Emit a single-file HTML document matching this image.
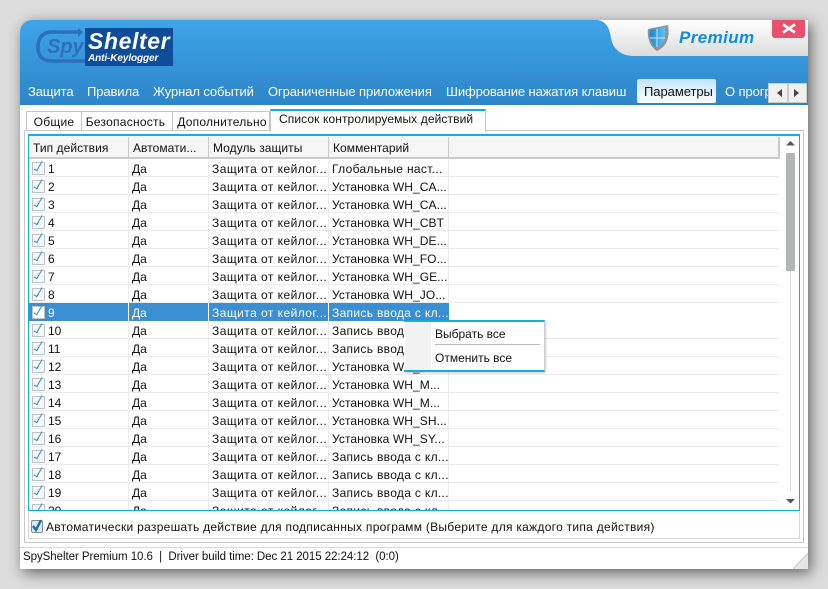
<!DOCTYPE html>
<html><head><meta charset="utf-8">
<style>
html,body{margin:0;padding:0;width:828px;height:589px;overflow:hidden;background:#dcdcdc;font-family:"Liberation Sans",sans-serif;font-size:12px;color:#111}
div,span{position:absolute;white-space:nowrap;box-sizing:border-box}
#win{left:20px;top:20px;width:788px;height:549px;background:#fff;border-radius:12px 0 0 0;box-shadow:3px 4px 14px rgba(0,0,0,.55)}
#head{left:20px;top:20px;width:788px;height:85px;border-radius:12px 0 0 0;background:linear-gradient(#3ea4e8,#2d85c8)}
.t{top:84px;color:#fff;font-size:13px;letter-spacing:-.1px}
.tab{top:111px;height:20px;border:1px solid #c4c4c4;border-bottom:none;background:#fff;padding:3px 0 0;text-align:center;letter-spacing:.25px}
.h{top:137px;height:22px;background:#f5f5f5;border-right:2px solid #cacaca;border-bottom:2px solid #cacaca;padding:4px 0 0 4px;letter-spacing:.05px}
.r{left:29px;width:750px;height:18px;border-bottom:1px solid #ececec}
.r span{top:3px}
.a{left:103px}.b{left:183px;letter-spacing:.45px}.c{left:303px;letter-spacing:.08px}.z{letter-spacing:.32px}.n{left:19px}
.r i{position:absolute;top:0;bottom:-1px;width:1px;background:#ececec}
.k{position:absolute;left:3px;top:3px;width:11px;height:11px;border:1px solid #bcc4ca;background:#f7f7f7}
.k:after{content:"";position:absolute;left:3px;top:-3px;width:3px;height:10px;border-right:1.7px solid #2a93bd;border-bottom:1.7px solid #2a93bd;transform:rotate(30deg)}
.s{background:#3a8fd2;color:#fff;width:420px;border:none}
.s .k{background:#fff}
</style></head><body>
<div id="win"></div>
<div id="head"></div>
<svg style="position:absolute;left:0;top:0" width="828" height="589">
<defs><linearGradient id="g" x1="0" y1="0" x2="0" y2="1"><stop offset="0" stop-color="#fff"/><stop offset="1" stop-color="#dcdcdc"/></linearGradient>
<linearGradient id="sh" x1="0" y1="0" x2="1" y2="0"><stop offset="0" stop-color="#1b86cf"/><stop offset="1" stop-color="#62c4ee"/></linearGradient></defs>
<path d="M596 20C608 20 610 32 611 38C613 50 622 56 634 56H808V20Z" fill="url(#g)"/>
<path d="M648 29L668 25C670 38 667 46 657 51C650 47 647 38 648 29Z" fill="#8f9498"/>
<path d="M650 30L665 27C666 38 664 44 656 48C651 44 649 38 650 30Z" fill="url(#sh)"/>
<path d="M657 29V47M650 38H665" stroke="#c5e9f8" stroke-width="1" fill="none"/>
<path d="M79 32H52C42 32 38 38 38 47C38 56 42 61 52 61H85" fill="none" stroke="#2d6ebd" stroke-width="3.5"/>
<path d="M78 28L83 32L78 37Z" fill="#2d6ebd"/>
<path d="M808 553L793 569H808Z" fill="#e6e6e6"/>
<path d="M808 553L793 569" stroke="#ccc"/>
</svg>
<span style="left:47px;top:36px;font:italic bold 20px 'Liberation Sans',sans-serif;color:#2d6ebd">Spy</span>
<div style="left:85px;top:28px;width:88px;height:38px;background:#0f4c99"></div>
<span style="left:88px;top:28px;font:italic bold 23px 'Liberation Sans',sans-serif;color:#fff;letter-spacing:.6px">Shelter</span>
<span style="left:88px;top:53px;font:italic bold 10px 'Liberation Sans',sans-serif;color:#fff;letter-spacing:-.1px">Anti-Keylogger</span>
<span style="left:679px;top:28px;font:italic bold 17px 'Liberation Sans',sans-serif;color:#0f8fd9;letter-spacing:.4px">Premium</span>
<div style="left:772px;top:20px;width:33px;height:18px;background:#e8506e;border-radius:0 0 3px 3px"></div>
<svg style="position:absolute;left:782px;top:23px" width="14" height="11"><path d="M1 1.5L13 9.5M13 1.5L1 9.5" stroke="#fff" stroke-width="2.6"/></svg>

<span class="t" style="left:28px">Защита</span>
<span class="t" style="left:87px">Правила</span>
<span class="t" style="left:153px">Журнал событий</span>
<span class="t" style="left:268px">Ограниченные приложения</span>
<span class="t" style="left:446px">Шифрование нажатия клавиш</span>
<div style="left:637px;top:79px;width:79px;height:24px;background:linear-gradient(#c4e4fa,#fff);border-radius:2px;padding:5px 0 0 7px;font-size:13px;color:#111;letter-spacing:-.05px">Параметры</div>
<div class="t" style="left:725px;width:44px;overflow:hidden">О программе</div>
<div style="left:768px;top:83px;width:20px;height:20px;background:#f0f0f0;border:1px solid #ccc"></div>
<div style="left:788px;top:83px;width:19px;height:20px;background:#f0f0f0;border:1px solid #ccc"></div>
<svg style="position:absolute;left:768px;top:83px" width="40" height="20"><path d="M14 6V14L9 10ZM26 6V14L31 10Z" fill="#444"/></svg>

<div class="tab" style="left:26px;width:56px">Общие</div>
<div class="tab" style="left:81px;width:92px;padding-right:3px">Безопасность</div>
<div class="tab" style="left:172px;width:98px;padding-left:2px">Дополнительно</div>
<div style="left:24px;top:130px;width:780px;height:413px;border:1px solid #c8c8c8;background:#fff"></div>
<div style="left:270px;top:109px;width:216px;height:23px;background:#fff;border:1px solid #c4c4c4;border-top:2px solid #12aee0;border-bottom:none;padding:1px 0 0 8px;letter-spacing:.1px">Список контролируемых действий</div>
<div style="left:28px;top:134px;width:772px;height:377px;border:2px solid #12aee0;background:#fff"></div>
<div style="left:29px;top:136px;width:770px;height:374px;overflow:hidden;background:#fff" id="l">
<div style="position:absolute;left:-29px;top:-136px;width:828px;height:589px">
<div class="h" style="left:29px;width:101px">Тип действия</div>
<div class="h" style="left:129px;width:81px">Автомати...</div>
<div class="h" style="left:209px;width:121px">Модуль защиты</div>
<div class="h" style="left:329px;width:121px">Комментарий</div>
<div class="h" style="left:449px;width:331px;border-left:none"></div>
<div class="r" style="top:159px"><b class="k"></b><span class="n">1</span><span class="a">Да</span><span class="b">Защита от кейлог...</span><span class="c z">Глобальные наст...</span><i style="left:99px"></i><i style="left:179px"></i><i style="left:299px"></i><i style="left:419px"></i></div>
<div class="r" style="top:177px"><b class="k"></b><span class="n">2</span><span class="a">Да</span><span class="b">Защита от кейлог...</span><span class="c">Установка WH_CA...</span><i style="left:99px"></i><i style="left:179px"></i><i style="left:299px"></i><i style="left:419px"></i></div>
<div class="r" style="top:195px"><b class="k"></b><span class="n">3</span><span class="a">Да</span><span class="b">Защита от кейлог...</span><span class="c">Установка WH_CA...</span><i style="left:99px"></i><i style="left:179px"></i><i style="left:299px"></i><i style="left:419px"></i></div>
<div class="r" style="top:213px"><b class="k"></b><span class="n">4</span><span class="a">Да</span><span class="b">Защита от кейлог...</span><span class="c">Установка WH_CBT</span><i style="left:99px"></i><i style="left:179px"></i><i style="left:299px"></i><i style="left:419px"></i></div>
<div class="r" style="top:231px"><b class="k"></b><span class="n">5</span><span class="a">Да</span><span class="b">Защита от кейлог...</span><span class="c">Установка WH_DE...</span><i style="left:99px"></i><i style="left:179px"></i><i style="left:299px"></i><i style="left:419px"></i></div>
<div class="r" style="top:249px"><b class="k"></b><span class="n">6</span><span class="a">Да</span><span class="b">Защита от кейлог...</span><span class="c">Установка WH_FO...</span><i style="left:99px"></i><i style="left:179px"></i><i style="left:299px"></i><i style="left:419px"></i></div>
<div class="r" style="top:267px"><b class="k"></b><span class="n">7</span><span class="a">Да</span><span class="b">Защита от кейлог...</span><span class="c">Установка WH_GE...</span><i style="left:99px"></i><i style="left:179px"></i><i style="left:299px"></i><i style="left:419px"></i></div>
<div class="r" style="top:285px"><b class="k"></b><span class="n">8</span><span class="a">Да</span><span class="b">Защита от кейлог...</span><span class="c">Установка WH_JO...</span><i style="left:99px"></i><i style="left:179px"></i><i style="left:299px"></i><i style="left:419px"></i></div>
<div class="r s" style="top:303px"><b class="k"></b><span class="n">9</span><span class="a">Да</span><span class="b">Защита от кейлог...</span><span class="c z">Запись ввода с кл...</span><i style="left:99px;background:#fff"></i><i style="left:179px;background:#fff"></i><i style="left:299px;background:#fff"></i></div>
<div class="r" style="top:321px"><b class="k"></b><span class="n">10</span><span class="a">Да</span><span class="b">Защита от кейлог...</span><span class="c z">Запись ввода с кл...</span><i style="left:99px"></i><i style="left:179px"></i><i style="left:299px"></i><i style="left:419px"></i></div>
<div class="r" style="top:339px"><b class="k"></b><span class="n">11</span><span class="a">Да</span><span class="b">Защита от кейлог...</span><span class="c z">Запись ввода с кл...</span><i style="left:99px"></i><i style="left:179px"></i><i style="left:299px"></i><i style="left:419px"></i></div>
<div class="r" style="top:357px"><b class="k"></b><span class="n">12</span><span class="a">Да</span><span class="b">Защита от кейлог...</span><span class="c">Установка WH_...</span><i style="left:99px"></i><i style="left:179px"></i><i style="left:299px"></i><i style="left:419px"></i></div>
<div class="r" style="top:375px"><b class="k"></b><span class="n">13</span><span class="a">Да</span><span class="b">Защита от кейлог...</span><span class="c">Установка WH_M...</span><i style="left:99px"></i><i style="left:179px"></i><i style="left:299px"></i><i style="left:419px"></i></div>
<div class="r" style="top:393px"><b class="k"></b><span class="n">14</span><span class="a">Да</span><span class="b">Защита от кейлог...</span><span class="c">Установка WH_M...</span><i style="left:99px"></i><i style="left:179px"></i><i style="left:299px"></i><i style="left:419px"></i></div>
<div class="r" style="top:411px"><b class="k"></b><span class="n">15</span><span class="a">Да</span><span class="b">Защита от кейлог...</span><span class="c">Установка WH_SH...</span><i style="left:99px"></i><i style="left:179px"></i><i style="left:299px"></i><i style="left:419px"></i></div>
<div class="r" style="top:429px"><b class="k"></b><span class="n">16</span><span class="a">Да</span><span class="b">Защита от кейлог...</span><span class="c">Установка WH_SY...</span><i style="left:99px"></i><i style="left:179px"></i><i style="left:299px"></i><i style="left:419px"></i></div>
<div class="r" style="top:447px"><b class="k"></b><span class="n">17</span><span class="a">Да</span><span class="b">Защита от кейлог...</span><span class="c z">Запись ввода с кл...</span><i style="left:99px"></i><i style="left:179px"></i><i style="left:299px"></i><i style="left:419px"></i></div>
<div class="r" style="top:465px"><b class="k"></b><span class="n">18</span><span class="a">Да</span><span class="b">Защита от кейлог...</span><span class="c z">Запись ввода с кл...</span><i style="left:99px"></i><i style="left:179px"></i><i style="left:299px"></i><i style="left:419px"></i></div>
<div class="r" style="top:483px"><b class="k"></b><span class="n">19</span><span class="a">Да</span><span class="b">Защита от кейлог...</span><span class="c z">Запись ввода с кл...</span><i style="left:99px"></i><i style="left:179px"></i><i style="left:299px"></i><i style="left:419px"></i></div>
<div class="r" style="top:501px"><b class="k"></b><span class="n">20</span><span class="a">Да</span><span class="b">Защита от кейлог...</span><span class="c z">Запись ввода с кл...</span><i style="left:99px"></i><i style="left:179px"></i><i style="left:299px"></i><i style="left:419px"></i></div>
<div style="left:790px;top:270px;width:1px;height:222px;background:#d8d8d8"></div>
<div style="left:786px;top:153px;width:9px;height:118px;background:#b4b6b5;border-radius:1px"></div>
</div></div>
<svg style="position:absolute;left:0;top:0;pointer-events:none" width="828" height="589">
<path d="M786 145.5L790.5 141L795 145.5Z" fill="#555"/><path d="M786 499H795L790.5 503.5Z" fill="#555"/>
</svg>
<div style="left:404px;top:320px;width:141px;height:52px;background:#fff;border-top:2px solid #12aee0;border-bottom:2px solid #12aee0;border-right:1px solid #ccc;box-shadow:1px 1px 2px rgba(0,0,0,.2)"></div>
<div style="left:405px;top:322px;width:26px;height:48px;background:#f2f2f2"></div>
<span style="left:435px;top:327px">Выбрать все</span>
<div style="left:435px;top:344px;width:105px;height:1px;background:#bbb"></div>
<span style="left:435px;top:351px">Отменить все</span>

<div style="left:28px;top:512px;width:772px;height:27px;border:1px solid #d8d8d8;border-top:none"></div>
<div style="left:31px;top:520px;width:12px;height:13px;border:1px solid #888;background:#dcecf6;border-radius:2px"></div>
<svg style="position:absolute;left:30px;top:518px" width="14" height="15"><path d="M3 8L6 12L11 2" fill="none" stroke="#1470a8" stroke-width="2.4"/></svg>
<span style="left:46px;top:520px;letter-spacing:.28px">Автоматически разрешать действие для подписанных программ (Выберите для каждого типа действия)</span>
<div style="left:20px;top:547px;width:788px;height:1px;background:#d8d8d8"></div>
<span style="left:23px;top:551px;font-size:11.5px;letter-spacing:-.05px">SpyShelter Premium 10.6&nbsp; |&nbsp; Driver build time: Dec 21 2015 22:24:12&nbsp; (0:0)</span>
</body></html>
